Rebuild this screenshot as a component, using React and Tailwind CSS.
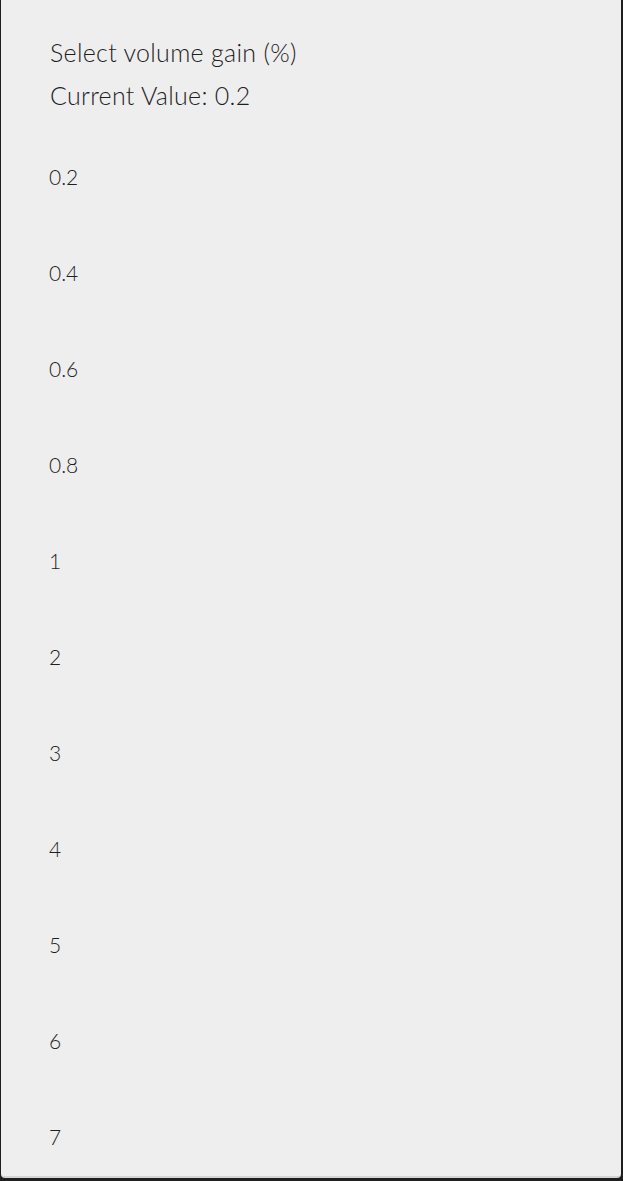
import React from "react";

const options = ["0.2", "0.4", "0.6", "0.8", "1", "2", "3", "4", "5", "6", "7"];

const App = () => {
  return (
    <div className="w-[623px] h-[1181px] bg-[#1e1e1e] overflow-hidden">
      <div
        className="ml-[1px] w-[620px] h-[1178px] bg-[#eeeeee] rounded-b-[4px] border-b-2 border-[#d4d4d4] overflow-hidden text-[#1f1f1f]"
        style={{ fontFamily: '"Lato", "Open Sans", sans-serif' }}
      >
        {/* Header */}
        <div className="pl-[49px] pt-[31px] font-light">
          <div className="text-[25px] leading-[43px] tracking-[0.3px]">Select volume gain (%)</div>
          <div className="text-[25px] leading-[43px] tracking-[0.3px]">Current Value: 0.2</div>
        </div>

        {/* Options */}
        <div className="mt-[12px]">
          {options.map((opt) => (
            <div key={opt} className="h-[96px] flex items-center pl-[48px] text-[21px] font-light">
              {opt}
            </div>
          ))}
        </div>
      </div>
    </div>
  );
};

export default App;
